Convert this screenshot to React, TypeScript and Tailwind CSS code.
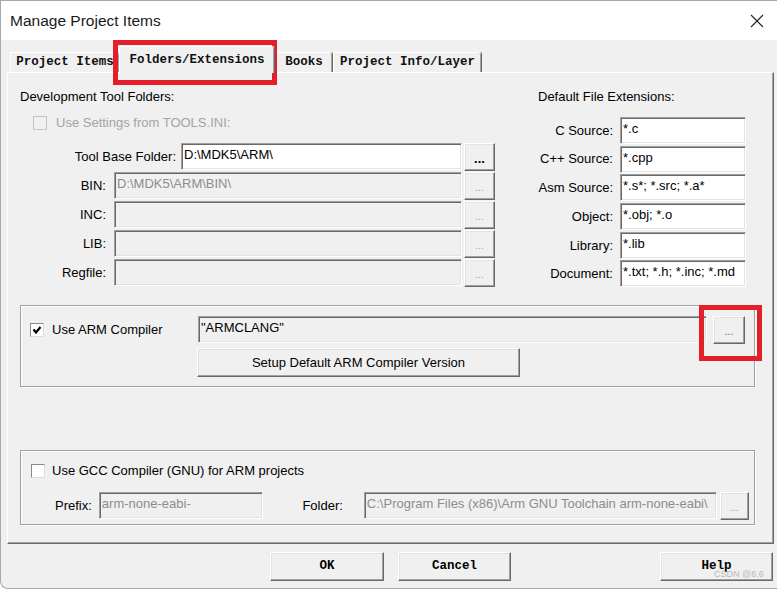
import React from 'react';

const sunken =
  'border border-t-[#a0a0a0] border-l-[#a0a0a0] border-r-white border-b-white shadow-[inset_1px_1px_0_#696969,inset_-1px_-1px_0_#e3e3e3]';
const raised =
  'border border-t-white border-l-white border-r-[#696969] border-b-[#696969] shadow-[inset_-1px_-1px_0_#a0a0a0,inset_1px_1px_0_#e3e3e3]';
const etched = 'border border-[#a0a0a0] shadow-[inset_1px_1px_0_#ffffff,1px_1px_0_#ffffff]';

function Field({
  value,
  disabled,
  className,
}: {
  value?: string;
  disabled?: boolean;
  className: string;
}) {
  return (
    <div
      className={`${sunken} ${className} h-[27px] truncate whitespace-nowrap pl-[2px] pt-[3px] leading-[16px] ${
        disabled ? 'bg-[#f0f0f0] text-[#8d8d8d]' : 'bg-white text-black'
      }`}
    >
      {value}
    </div>
  );
}

function Browse({ disabled, className }: { disabled?: boolean; className: string }) {
  return (
    <div
      className={`${raised} ${className} flex h-[28px] items-end justify-center pb-[6px] leading-[10px] ${
        disabled ? 'text-[10px] text-[#a0a0a0]' : 'text-[13px] font-bold text-black'
      }`}
    >
      ...
    </div>
  );
}

function Check({ checked, disabled }: { checked?: boolean; disabled?: boolean }) {
  return (
    <div
      className={`flex h-[14px] w-[14px] shrink-0 items-center justify-center border ${
        disabled
          ? 'border-[#c4c4c4] bg-[#f0f0f0]'
          : 'border-t-[#8a8a8a] border-l-[#8a8a8a] border-r-[#dcdcdc] border-b-[#dcdcdc] bg-white'
      }`}
    >
      {checked && (
        <svg viewBox="0 0 10 10" className="h-[10px] w-[10px]">
          <path d="M1.5 4.5 L4 7.5 L8.5 2" stroke="#000" strokeWidth="2.2" fill="none" />
        </svg>
      )}
    </div>
  );
}

function Tab({ label, active, className }: { label: string; active?: boolean; className: string }) {
  if (active) {
    return (
      <div
        className={`${className} relative z-10 -mb-px flex h-[27px] justify-center rounded-t-[2px] border-l border-t border-white bg-[#f0f0f0] pt-[6px] leading-[15px] shadow-[1px_0_0_#696969,inset_-1px_0_0_#a0a0a0]`}
      >
        {label}
      </div>
    );
  }
  return (
    <div
      className={`${className} flex h-[20px] items-center justify-center rounded-t-[2px] border-l border-t border-white leading-[15px] shadow-[1px_0_0_#696969,inset_-1px_0_0_#a0a0a0]`}
    >
      {label}
    </div>
  );
}

const folderRows = [
  { label: 'BIN:', value: 'D:\\MDK5\\ARM\\BIN\\' },
  { label: 'INC:', value: '' },
  { label: 'LIB:', value: '' },
  { label: 'Regfile:', value: '' },
];

const extRows = [
  { label: 'C Source:', value: '*.c' },
  { label: 'C++ Source:', value: '*.cpp' },
  { label: 'Asm Source:', value: '*.s*; *.src; *.a*' },
  { label: 'Object:', value: '*.obj; *.o' },
  { label: 'Library:', value: '*.lib' },
  { label: 'Document:', value: '*.txt; *.h; *.inc; *.md' },
];

export default function App() {
  return (
    <div className="relative h-[589px] w-[777px] overflow-hidden bg-white font-['Liberation_Sans',Arial,sans-serif] text-[13px] text-black">
      <div className="flex h-[589px] w-[777px] flex-col rounded-bl-[8px] border-b border-l border-t border-[#a8a8a8] bg-[#f0f0f0]">
        {/* title bar */}
        <div className="flex h-[39px] items-center justify-between bg-white pl-[9px] pr-[13px]">
          <span className="text-[15.5px] leading-[20px] text-[#1a1a1a]">Manage Project Items</span>
          <svg viewBox="0 0 14 14" className="h-[14px] w-[14px]">
            <path d="M1 1 L13 13 M13 1 L1 13" stroke="#222" strokeWidth="1.1" />
          </svg>
        </div>

        {/* tabs */}
        <div className="flex h-[32px] items-end pl-[9px] font-['Liberation_Mono',monospace] text-[12.5px] font-bold text-[#111]">
          <Tab label="Project Items" className="w-[109px]" />
          <Tab label="Folders/Extensions" active className="w-[155px]" />
          <Tab label="Books" className="ml-[1px] w-[57px]" />
          <Tab label="Project Info/Layer" className="ml-[1px] w-[148px]" />
        </div>

        {/* tab page */}
        <div className="ml-[6px] flex h-[472px] w-[767px] flex-col border-b border-l border-r border-t border-b-[#696969] border-l-white border-r-[#696969] border-t-white pl-[12px] pt-[16px] shadow-[inset_-1px_-1px_0_#a0a0a0]">
          <div className="flex">
            <div className="flex w-[475px] flex-col">
              <div className="leading-[15px]">Development Tool Folders:</div>
              <div className="mt-[12px] flex h-[13px] items-center pl-[13px]">
                <Check disabled />
                <span className="ml-[9px] text-[#a3a3a3]">Use Settings from TOOLS.INI:</span>
              </div>
              <div className="mt-[14px] flex flex-col gap-[2px]">
                <div className="flex h-[27px] items-center">
                  <span className="flex-1 pr-[5px] text-right">Tool Base Folder:</span>
                  <Field value={'D:\\MDK5\\ARM\\'} className="w-[281px]" />
                  <Browse className="ml-[2px] w-[31px]" />
                </div>
                {folderRows.map((r) => (
                  <div key={r.label} className="flex h-[27px] items-center">
                    <span className="flex-1 pr-[8px] text-right">{r.label}</span>
                    <Field value={r.value} disabled className="w-[348px]" />
                    <Browse disabled className="ml-[2px] w-[31px]" />
                  </div>
                ))}
              </div>
            </div>

            <div className="ml-[43px] flex w-[208px] flex-col">
              <div className="leading-[15px]">Default File Extensions:</div>
              <div className="mt-[13px] flex flex-col gap-[1.7px]">
                {extRows.map((r) => (
                  <div key={r.label} className="flex h-[27px] items-center">
                    <span className="w-[75px] text-right">{r.label}</span>
                    <Field value={r.value} className="ml-[7px] w-[126px]" />
                  </div>
                ))}
              </div>
            </div>
          </div>

          {/* ARM compiler group */}
          <div className={`${etched} mt-[18px] flex w-[735px] flex-col pb-[9px] pt-[10px]`}>
            <div className="flex h-[27px] items-center">
              <div className="flex w-[177px] items-center pl-[9px]">
                <Check checked />
                <span className="ml-[8px]">Use ARM Compiler</span>
              </div>
              <Field value={'"ARMCLANG"'} disabled className="w-[509px] !text-black" />
              <Browse disabled className="ml-[6px] w-[32px] !text-[#555]" />
            </div>
            <div
              className={`${raised} ml-[176px] mt-[5px] flex h-[29px] w-[323px] items-center justify-center`}
            >
              Setup Default ARM Compiler Version
            </div>
          </div>

          {/* GCC group */}
          <div className={`${etched} mt-[63px] flex w-[735px] flex-col pb-[5px] pt-[12px]`}>
            <div className="flex h-[15px] items-center pl-[10px]">
              <Check />
              <span className="ml-[7px]">Use GCC Compiler (GNU) for ARM projects</span>
            </div>
            <div className="mt-[14px] flex h-[27px] items-center pl-[34px]">
              <span>Prefix:</span>
              <Field value="arm-none-eabi-" disabled className="ml-[7px] w-[164px]" />
              <span className="w-[80px] text-right">Folder:</span>
              <Field
                value={'C:\\Program Files (x86)\\Arm GNU Toolchain arm-none-eabi\\'}
                disabled
                className="ml-[21px] w-[353px]"
              />
              <Browse disabled className="ml-[3px] w-[29px]" />
            </div>
          </div>
        </div>

        {/* dialog buttons */}
        <div className="mt-[8px] flex h-[29px] font-['Liberation_Mono',monospace] text-[12.5px] font-bold">
          <div className={`${raised} ml-[269px] flex w-[114px] items-center justify-center`}>OK</div>
          <div className={`${raised} ml-[14px] flex w-[113px] items-center justify-center`}>Cancel</div>
          <div className={`${raised} ml-[149px] flex w-[113px] items-center justify-center`}>Help</div>
        </div>
      </div>

      {/* annotation overlays */}
      <div className="absolute left-[113px] top-[40px] h-[45px] w-[164px] border-[5px] border-[#e3202a]" />
      <div className="absolute left-[699px] top-[305px] h-[56px] w-[63px] border-[5px] border-[#e3202a]" />
      <div className="absolute left-[714px] top-[569px] text-[9px] leading-[10px] text-[#b8b8b8]">CSDN @6,6</div>
    </div>
  );
}
